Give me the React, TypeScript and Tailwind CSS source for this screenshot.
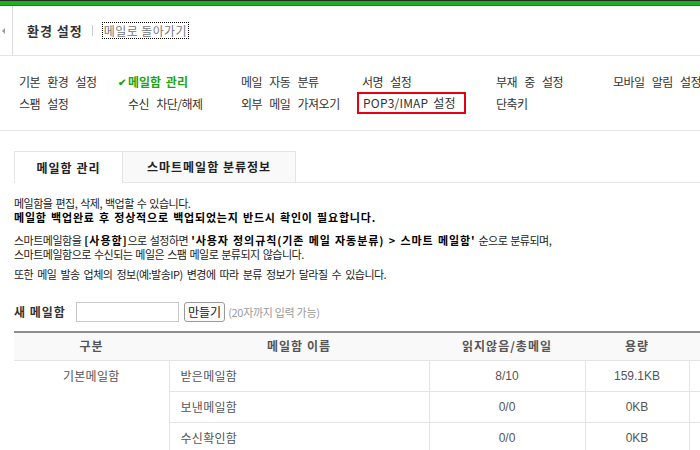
import React from "react";

const NAV_ROW1 = ["기본 환경 설정", "메일함 관리", "메일 자동 분류", "서명 설정", "부재 중 설정", "모바일 알림 설정"];
const NAV_ROW2 = ["스팸 설정", "수신 차단/해제", "외부 메일 가져오기", "POP3/IMAP 설정", "단축키", ""];

const ROWS = [
  { name: "받은메일함", count: "8/10", size: "159.1KB" },
  { name: "보낸메일함", count: "0/0", size: "0KB" },
  { name: "수신확인함", count: "0/0", size: "0KB" },
];

function NavItem({ label, col }: { label: string; col: number }) {
  if (label === "메일함 관리") {
    return (
      <span className="flex items-center font-bold text-[#22a40f]">
        <span className="w-[10px] text-[10px]">✔</span>
        <span className="tracking-[0px] [word-spacing:2px]">{label}</span>
      </span>
    );
  }
  if (label === "POP3/IMAP 설정") {
    return (
      <span className="-ml-[5px] inline-block h-[22px] border-2 border-[#e60012] pl-[4px] pr-[8px] leading-[18px] tracking-[0.2px] [word-spacing:2px]">
        {label}
      </span>
    );
  }
  return <span className={col === 1 ? "pl-[10px]" : ""}>{label}</span>;
}

export default function App() {
  return (
    <div className="h-[450px] w-[700px] overflow-hidden bg-white font-['Noto_Sans_CJK_KR',sans-serif] text-[#333]">
      <div className="h-[1px] bg-[#2b2b2b]" />
      <div className="h-[5px] border-b border-[#118a11] bg-[#1db21d]" />

      {/* header */}
      <div className="flex h-[50px] border-b border-[#e5e5e5]">
        <div className="flex w-[13px] items-center border-r border-[#dcdcdc]">
          <span className="ml-[2px] h-0 w-0 border-y-[3px] border-r-[3px] border-y-transparent border-r-[#999]" />
        </div>
        <div className="flex items-center pl-[14px]">
          <span className="text-[13px] font-bold tracking-[1px] text-[#333]">환경 설정</span>
          <span className="mx-[9px] h-[11px] w-px bg-[#ccc]" />
          <span className="border border-dotted border-black px-[1px] text-[12px] leading-[15px] tracking-[0.4px] text-[#777]">
            메일로 돌아가기
          </span>
        </div>
      </div>

      {/* nav */}
      <div className="border-b border-[#e5e5e5] pl-[19px] pt-[15px] pb-[16px] text-[12px] leading-[21px] tracking-[-0.5px] [word-spacing:5px]">
        {[NAV_ROW1, NAV_ROW2].map((row, ri) => (
          <div key={ri} className="grid grid-cols-[99px_123px_121px_134px_117px_120px] whitespace-nowrap">
            {row.map((l, i) => (
              <div key={i} className="flex items-center">
                {l && <NavItem label={l} col={i} />}
              </div>
            ))}
          </div>
        ))}
      </div>

      {/* tabs */}
      <div className="ml-[14px] mt-[20px] flex h-[32px]">
        <div className="flex w-[108px] items-center justify-center border-l border-t border-[#e5e5e5] bg-white text-[12px] font-bold tracking-[1px] text-[#222]">
          메일함 관리
        </div>
        <div className="flex w-[174px] items-center justify-center border border-[#e5e5e5] bg-[#f9f9f9] text-[12px] font-bold tracking-[1px] text-[#222]">
          스마트메일함 분류정보
        </div>
        <div className="flex-1 border-b border-[#e5e5e5]" />
      </div>

      {/* description */}
      <div className="ml-[14px] mt-[13px] text-[11px] leading-[14px] tracking-[-0.5px] text-[#222] [word-spacing:1px]">
        <p>메일함을 편집, 삭제, 백업할 수 있습니다.</p>
        <p className="whitespace-nowrap font-bold tracking-[0.8px] text-black">
          메일함 백업완료 후 정상적으로 백업되었는지 반드시 확인이 필요합니다.
        </p>
        <p className="mt-[9px] whitespace-nowrap">
          스마트메일함을 <b className="tracking-[0.9px] text-black">[사용함]</b>으로 설정하면{" "}
          <b className="tracking-[0.9px] text-black">'사용자 정의규칙(기존 메일 자동분류) &gt; 스마트 메일함'</b> 순으로 분류되며,
        </p>
        <p>스마트메일함으로 수신되는 메일은 스팸 메일로 분류되지 않습니다.</p>
        <p className="mt-[6px] whitespace-nowrap [word-spacing:2px]">
          또한 메일 발송 업체의 정보(예:발송IP) 변경에 따라 분류 정보가 달라질 수 있습니다.
        </p>
      </div>

      {/* new mailbox */}
      <div className="ml-[14px] mt-[21px] flex h-[20px] items-center">
        <span className="w-[62px] text-[12px] font-bold tracking-[1px] text-[#333]">새 메일함</span>
        <input className="h-[20px] w-[103px] border border-[#c8c8c8] outline-none" />
        <button className="ml-[5px] h-[20px] rounded-[3px] border border-[#9a9a9a] bg-[#fafafa] px-[3px] text-[12px] leading-[16px] text-[#222]">
          만들기
        </button>
        <span className="ml-[3px] text-[11px] tracking-[-0.3px] text-[#999]">(20자까지 입력 가능)</span>
      </div>

      {/* table */}
      <table className="ml-[14px] mt-[9px] w-[800px] table-fixed border-collapse border-t-2 border-[#8c8c8c] text-[12px]">
        <colgroup>
          <col className="w-[155px]" />
          <col className="w-[260px]" />
          <col className="w-[156px]" />
          <col className="w-[104px]" />
          <col />
        </colgroup>
        <thead>
          <tr className="h-[28px] border-b border-[#e5e5e5] bg-[#f9f9f9] font-bold tracking-[1px] text-[#555]">
            <th className="font-bold">구분</th>
            <th className="font-bold">메일함 이름</th>
            <th className="font-bold">읽지않음/총메일</th>
            <th className="font-bold">용량</th>
            <th />
          </tr>
        </thead>
        <tbody className="text-[#555]">
          {ROWS.map((r, i) => (
            <tr key={r.name} className="h-[31px]">
              {i === 0 && (
                <td rowSpan={3} className="border-r border-[#e5e5e5] pt-[6px] text-center align-top tracking-[0.3px]">
                  기본메일함
                </td>
              )}
              <td className="border-b border-r border-[#e5e5e5] pl-[11px] tracking-[0.3px]">{r.name}</td>
              <td className="border-b border-r border-[#e5e5e5] text-center font-['Liberation_Sans',sans-serif] text-[12px]">{r.count}</td>
              <td className="border-b border-r border-[#e5e5e5] text-center font-['Liberation_Sans',sans-serif] text-[12px]">{r.size}</td>
              <td className="border-b border-[#e5e5e5]" />
            </tr>
          ))}
        </tbody>
      </table>
    </div>
  );
}
